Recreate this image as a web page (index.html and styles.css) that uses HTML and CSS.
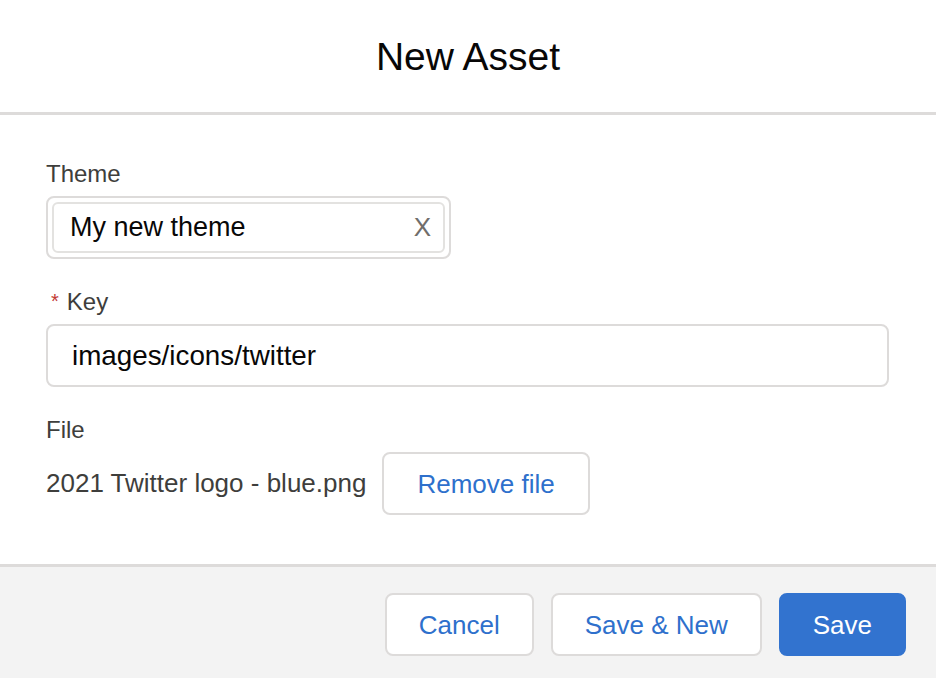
FILE: index.html
```html
<!DOCTYPE html>
<html lang="en">
<head>
<meta charset="utf-8">
<title>New Asset</title>
<link rel="stylesheet" href="styles.css">
</head>
<body>
<div class="modal">
  <header class="modal-header">
    <h1 class="modal-title">New Asset</h1>
  </header>
  <main class="modal-body">
    <div class="field">
      <div class="label">Theme</div>
      <div class="lookup">
        <div class="pill">
          <span class="pill-text">My new theme</span>
          <span class="pill-remove">X</span>
        </div>
      </div>
    </div>
    <div class="field">
      <div class="label"><span class="required">*</span>Key</div>
      <div class="input">images/icons/twitter</div>
    </div>
    <div class="field field-file">
      <div class="label">File</div>
      <div class="file-row">
        <span class="file-name">2021 Twitter logo - blue.png</span>
        <button class="btn btn-neutral btn-remove">Remove file</button>
      </div>
    </div>
  </main>
  <footer class="modal-footer">
    <button class="btn btn-neutral">Cancel</button>
    <button class="btn btn-neutral">Save &amp; New</button>
    <button class="btn btn-brand">Save</button>
  </footer>
</div>
</body>
</html>
```

FILE: styles.css
```css
* { box-sizing: border-box; }
html, body {
  margin: 0;
  padding: 0;
  background: #ffffff;
}
body {
  font-family: "Liberation Sans", Arial, sans-serif;
  color: #080707;
}
.modal {
  width: 936px;
  height: 678px;
  display: flex;
  flex-direction: column;
  background: #ffffff;
}
.modal-header {
  height: 115px;
  flex: 0 0 115px;
  border-bottom: 3px solid #dddbda;
  display: flex;
  align-items: center;
  justify-content: center;
  padding-top: 2px;
}
.modal-title {
  margin: 0;
  font-weight: 400;
  font-size: 39px;
  color: #080707;
}
.modal-body {
  flex: 1;
  padding: 44px 47px 0 46px;
  display: flex;
  flex-direction: column;
}
.field {
  margin-bottom: 27px;
}
.field-file {
  margin-top: 1px;
}
.label {
  font-size: 24px;
  line-height: 30px;
  color: #3e3e3c;
  margin-bottom: 7px;
}
.required {
  color: #c23934;
  font-size: 20px;
  margin: 0 8px 0 5px;
  vertical-align: 2px;
}
.lookup {
  width: 405px;
  height: 63px;
  border: 2px solid #dddbda;
  border-radius: 8px;
  padding: 4px;
}
.pill {
  height: 51px;
  border: 2px solid #e3e2e0;
  border-radius: 6px;
  display: flex;
  align-items: center;
  justify-content: space-between;
  padding: 0 12px 0 16px;
}
.pill-text {
  font-size: 27px;
  color: #080707;
}
.pill-remove {
  font-size: 26px;
  color: #706e6b;
}
.input {
  height: 63px;
  border: 2px solid #dddbda;
  border-radius: 8px;
  padding: 0 24px;
  display: flex;
  align-items: center;
  font-size: 27.8px;
  color: #080707;
}
.file-row {
  display: flex;
  align-items: center;
  gap: 16px;
}
.file-name {
  font-size: 26px;
  color: #3e3e3c;
}
.btn {
  font-family: "Liberation Sans", Arial, sans-serif;
  font-size: 26px;
  height: 63px;
  padding: 0 32px;
  border-radius: 8px;
  border: 2px solid #dddbda;
  background: #ffffff;
  color: #2e70cc;
  line-height: 1;
}
.btn-remove {
  padding: 0 33px;
}
.btn-brand {
  background: #3273cf;
  border-color: #3273cf;
  color: #ffffff;
}
.modal-footer {
  flex: 0 0 114px;
  border-top: 3px solid #dddbda;
  background: #f3f3f3;
  display: flex;
  justify-content: flex-end;
  align-items: flex-start;
  gap: 17px;
  padding: 26px 30px 0 0;
}
```
